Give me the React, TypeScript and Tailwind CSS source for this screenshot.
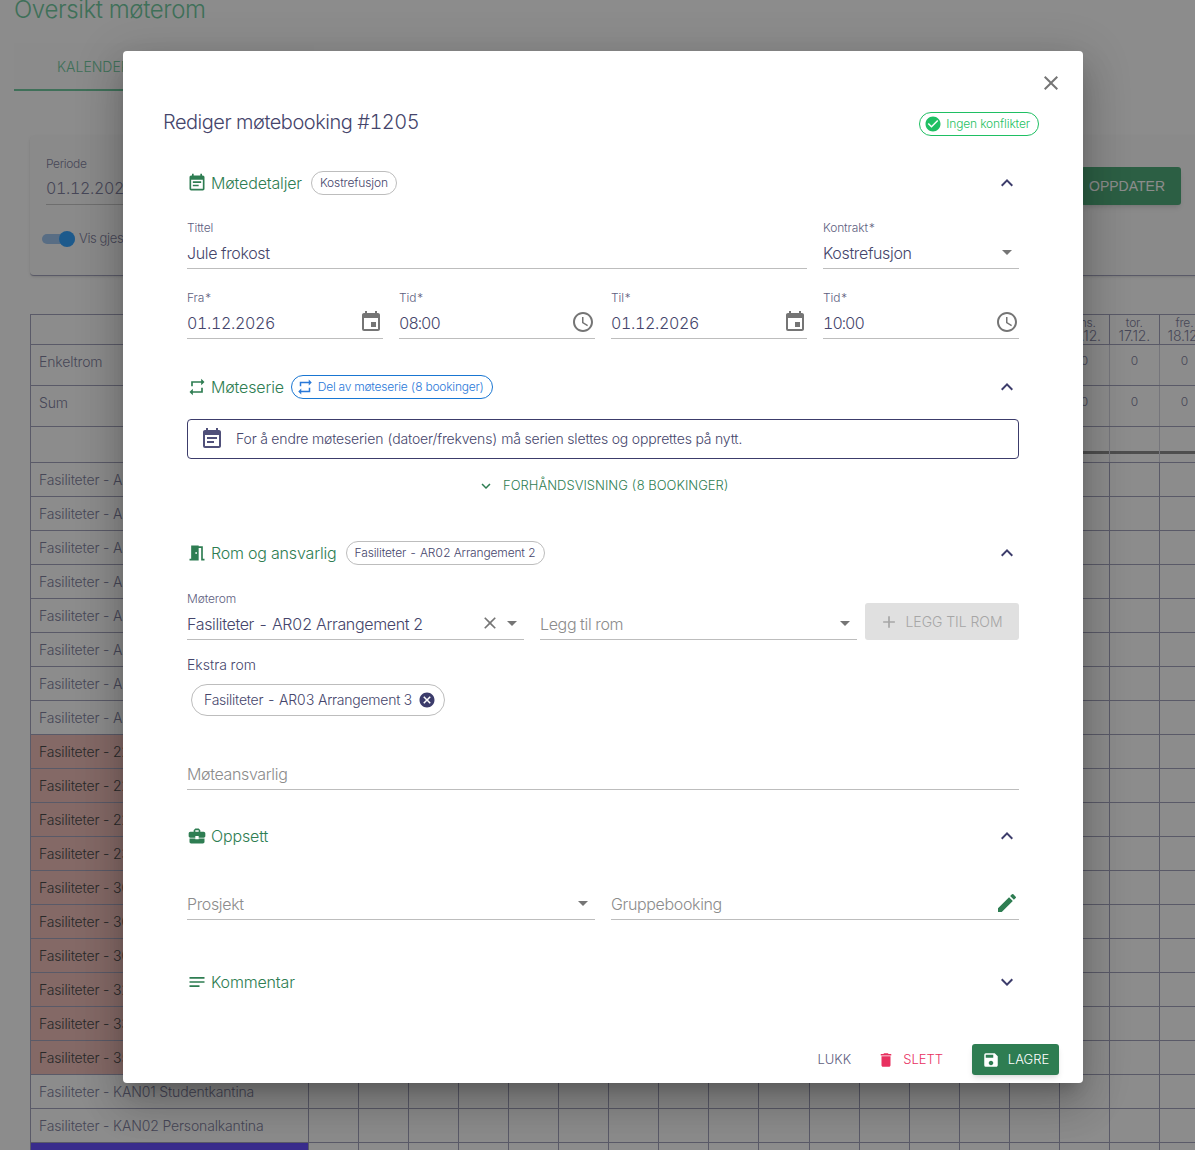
import type { ReactNode } from "react";
import {
  MdAccessTime,
  MdAdd,
  MdArrowDropDown,
  MdBusinessCenter,
  MdCancel,
  MdCheckCircle,
  MdClose,
  MdDelete,
  MdEdit,
  MdEvent,
  MdEventNote,
  MdExpandLess,
  MdExpandMore,
  MdMeetingRoom,
  MdNotes,
  MdRepeat,
  MdSave,
} from "react-icons/md";

const roomRows = [
  ...["AR01 Arrangement 1", "AR02 Arrangement 2", "AR03 Arrangement 3", "AR04 Arrangement 4", "AR05 Arrangement 5", "AR06 Arrangement 6", "AR07 Arrangement 7", "AR08 Arrangement 8"].map((n) => ({ name: n, red: false })),
  ...["227", "228", "229", "230", "301", "302", "303", "320", "330", "350"].map((n) => ({ name: n, red: true })),
  { name: "KAN01 Studentkantina", red: false },
  { name: "KAN02 Personalkantina", red: false },
];

const dayCols = Array.from({ length: 18 }, (_, i) => i);

// Bakgrunnssiden bak dialogen
const BackgroundTable = () => (
  <table className="ml-[30px] mt-[38px] w-[1180px] table-fixed border-collapse text-[14px] normal-nums tracking-[-0.011em] text-[#8282a0]">
    <colgroup>
      <col className="w-[278px]" />
      {dayCols.map((c) => (
        <col key={c} className="w-[50.05px]" />
      ))}
    </colgroup>
    <tbody>
      <tr className="h-[30px]">
        <td className="border border-[#a5a5bd]" />
        {dayCols.map((c) => (
          <td key={c} className="border border-[#a5a5bd] text-center text-[12px] leading-[13px]">
            {c === 15 && <>ons.<br /><span className="text-[14px]">16.12.</span></>}
            {c === 16 && <>tor.<br /><span className="text-[14px]">17.12.</span></>}
            {c === 17 && <>fre.<br /><span className="text-[14px]">18.12.</span></>}
          </td>
        ))}
      </tr>
      {["Enkeltrom", "Sum"].map((label) => (
        <tr key={label} className="h-[41px]">
          <td className="border border-[#a5a5bd] px-2 pb-[7px]">{label}</td>
          {dayCols.map((c) => (
            <td key={c} className="border-y border-y-[#a5a5bd] border-x border-x-[#d5d5e0] pb-[9px] text-center text-[12px]">
              {c >= 15 ? "0" : ""}
            </td>
          ))}
        </tr>
      ))}
      <tr className="h-[36px]">
        <td className="border border-[#a5a5bd]" />
        {dayCols.map((c) => (
          <td key={c} className="border border-[#d5d5e0] border-b-[#a5a5bd] p-0 align-top">
            <div className="mt-[24px] h-[3px] bg-[#8e8e8e]" />
          </td>
        ))}
      </tr>
      {roomRows.map((row) => (
        <tr key={row.name} className="h-[34px]">
          <td className={`border border-[#a5a5bd] whitespace-nowrap px-2 ${row.red ? "bg-[#f0c0bb] text-[#4c4c4c]" : ""}`}>
            Fasiliteter - {row.name}
          </td>
          {dayCols.map((c) => (
            <td key={c} className="border border-[#a5a5bd]" />
          ))}
        </tr>
      ))}
      <tr className="h-[34px]">
        <td className="border border-[#a5a5bd] bg-[#6950ff]" />
        {dayCols.map((c) => (
          <td key={c} className="border border-[#a5a5bd]" />
        ))}
      </tr>
    </tbody>
  </table>
);

const BackgroundPage = () => (
  <div className="bg-white">
    <h1 className="-mt-[4px] ml-[14px] text-[24px] leading-[28px] text-[#73cca2]">Oversikt møterom</h1>
    <div className="ml-[14px] mt-[19px] h-[48px] w-[300px] border-b-2 border-[#73cca2] bg-[#fdfdfd] pl-[43px] pt-[14px] text-[14px] leading-[20px] tracking-normal text-[#73cca2]">
      KALENDER
    </div>
    <div className="ml-[30px] mt-[45px] flex h-[140px] w-[1180px] rounded border-b border-[#a5a5bd] bg-[#fcfcfc] pl-[16px] pr-[29px] pt-[21px] shadow-sm">
      <div className="w-[200px]">
        <div className="text-[12px] leading-[14px] text-[#8282a0]">Periode</div>
        <div className="mt-[5px] w-[180px] border-b border-[#c8c8c8] pb-[4px] text-[16px] leading-[24px] text-[#8282a0]">01.12.2026</div>
        <div className="-ml-[4px] mt-[24px] flex items-center gap-[4px] text-[13px] text-[#8282a0]">
          <div className="relative h-[10px] w-[33px] rounded-full bg-[#a0c6f0]">
            <div className="absolute -top-[3px] right-0 h-[16px] w-[16px] rounded-full bg-[#35a4ff]" />
          </div>
          Vis gjester
        </div>
      </div>
      <div className="ml-auto mt-[10px] flex h-[38px] w-[100px] items-center justify-end rounded-[3px] bg-[#50ad7c] pr-[16px] font-['Liberation_Sans',sans-serif] text-[14px] font-medium tracking-normal text-white shadow-md">
        OPPDATER
      </div>
    </div>
    <BackgroundTable />
  </div>
);

const Field = ({
  label,
  value,
  placeholder,
  right,
  valueClassName = "",
  className,
}: {
  label?: string;
  value?: string;
  placeholder?: string;
  right?: ReactNode;
  valueClassName?: string;
  className: string;
}) => (
  <div className={className}>
    {label && <div className="h-[14px] text-[12px] leading-[14px] tracking-[-0.01em] text-[#5e5e80]">{label}</div>}
    <div className="flex h-[34px] items-center border-b border-[#bdbdbd]">
      <span className={`flex-1 pt-[2px] text-[16px] ${value ? "text-[#45456b]" : "text-[#8c8c8c]"} ${valueClassName}`}>{value ?? placeholder}</span>
      {right}
    </div>
  </div>
);

const SectionHeader = ({
  icon,
  title,
  chip,
  open = true,
  className,
}: {
  icon: ReactNode;
  title: string;
  chip?: ReactNode;
  open?: boolean;
  className: string;
}) => (
  <div className={`flex h-[48px] items-center ${className}`}>
    <span className="text-[20px] text-[#2e7d52]">{icon}</span>
    <span className="ml-[4px] mr-px text-[16px] tracking-[-0.01em] text-[#2e7d52]">{title}</span>
    {chip}
    <span className="ml-auto text-[24px] text-[#3c3c6b]">{open ? <MdExpandLess /> : <MdExpandMore />}</span>
  </div>
);

const GrayChip = ({ children }: { children: ReactNode }) => (
  <span className="ml-[8px] flex h-[24px] items-center rounded-full border border-[#bdbdbd] px-[8px] text-[12px] tracking-[-0.012em] text-[#45456b]">
    {children}
  </span>
);

const Dialog = () => (
  <div className="absolute left-[123px] top-[51px] h-[1032px] w-[960px] rounded bg-white pt-[61px] shadow-[0_11px_15px_-7px_rgba(0,0,0,.2),0_24px_38px_3px_rgba(0,0,0,.14),0_9px_46px_8px_rgba(0,0,0,.12)]">
    <MdClose className="absolute right-[20px] top-[20px] text-[24px] text-[#757575]" />

    <div className="flex h-[23px] items-center pl-[40px] pr-[44px]">
      <h2 className="flex-1 pb-[3px] text-[20px] tracking-[-0.024em] text-[#45456b]">Rediger møtebooking #1205</h2>
      <span className="flex h-[24px] items-center gap-[4px] rounded-full border border-[#1fbf63] pl-[4px] pr-[8px] text-[12px] tracking-[-0.01em] text-[#1fbf63]">
        <MdCheckCircle className="text-[18px]" />
        Ingen konflikter
      </span>
    </div>

    <div className="px-[64px]">
      <SectionHeader
        className="mt-[24px]"
        icon={<MdEventNote />}
        title="Møtedetaljer"
        chip={<GrayChip>Kostrefusjon</GrayChip>}
      />
      <div className="mt-[14px] flex gap-[16px]">
        <Field className="w-[620px]" label="Tittel" value="Jule frokost" />
        <Field
          className="w-[196px]"
          label="Kontrakt*"
          value="Kostrefusjon"
          right={<MdArrowDropDown className="text-[24px] text-[#757575]" />}
        />
      </div>
      <div className="mt-[22px] flex gap-[16px]">
        <Field className="w-[196px]" label="Fra*" value="01.12.2026" right={<MdEvent className="text-[24px] text-[#757575]" />} />
        <Field className="w-[196px]" label="Tid*" value="08:00" valueClassName="tracking-[-0.06em]" right={<MdAccessTime className="text-[24px] text-[#757575]" />} />
        <Field className="w-[196px]" label="Til*" value="01.12.2026" right={<MdEvent className="text-[24px] text-[#757575]" />} />
        <Field className="w-[196px]" label="Tid*" value="10:00" valueClassName="tracking-[-0.06em]" right={<MdAccessTime className="text-[24px] text-[#757575]" />} />
      </div>

      <SectionHeader
        className="mt-[24px]"
        icon={<MdRepeat />}
        title="Møteserie"
        chip={
          <span className="ml-[6px] flex h-[24px] items-center gap-[4px] rounded-full border border-[#1976d2] pl-[4px] pr-[8px] text-[12px] tracking-[-0.019em] text-[#2979d9]">
            <MdRepeat className="text-[18px]" />
            Del av møteserie (8 bookinger)
          </span>
        }
      />
      <div className="mt-[8px] flex h-[40px] items-center gap-[12px] rounded border border-[#3c3c6b] pl-[12px] text-[14px] tracking-[-0.0105em] text-[#45456b]">
        <MdEventNote className="text-[24px] text-[#50507a]" />
        <span className="pb-[2px]">For å endre møteserien (datoer/frekvens) må serien slettes og opprettes på nytt.</span>
      </div>
      <div className="mt-[8px] flex h-[36px] items-center justify-center gap-[8px] pt-[2px] text-[13px] tracking-normal text-[#2e7d52]">
        <MdExpandMore className="text-[18px]" />
        FORHÅNDSVISNING (8 BOOKINGER)
      </div>

      <SectionHeader
        className="mt-[26px]"
        icon={<MdMeetingRoom />}
        title="Rom og ansvarlig"
        chip={<GrayChip>Fasiliteter - AR02 Arrangement 2</GrayChip>}
      />
      <div className="mt-[15px] flex items-end gap-[16px]">
        <Field
          className="w-[337px]"
          label="Møterom"
          value="Fasiliteter - AR02 Arrangement 2"
          right={
            <>
              <MdClose className="text-[20px] text-[#757575]" />
              <MdArrowDropDown className="text-[24px] text-[#757575]" />
            </>
          }
        />
        <Field
          className="w-[317px]"
          placeholder="Legg til rom"
          right={<MdArrowDropDown className="text-[24px] text-[#757575]" />}
        />
        <button className="-ml-[8px] flex h-[37px] w-[154px] items-center justify-center gap-[6px] rounded-[3px] bg-[#e0e0e0] pr-[2px] text-[14px] tracking-normal text-[#a6a6a6]">
          <MdAdd className="text-[20px]" />
          LEGG TIL ROM
        </button>
      </div>
      <div className="mt-[15px] text-[14px] leading-[20px] tracking-normal text-[#45456b]">Ekstra rom</div>
      <div className="ml-[4px] mt-[9px] flex h-[32px] w-fit items-center gap-[6px] rounded-full border border-[#bdbdbd] pl-[12px] pr-[8px] text-[14px] tracking-[-0.018em] text-[#45456b]">
        <span className="pb-[2px]">Fasiliteter - AR03 Arrangement 3</span>
        <MdCancel className="text-[18px] text-[#3c3c6b]" />
      </div>
      <Field className="mt-[40px] w-full" placeholder="Møteansvarlig" />

      <SectionHeader className="mt-[22px]" icon={<MdBusinessCenter />} title="Oppsett" />
      <div className="mt-[26px] flex gap-[16px]">
        <Field className="w-[408px]" placeholder="Prosjekt" right={<MdArrowDropDown className="text-[24px] text-[#757575]" />} />
        <Field className="w-[408px]" placeholder="Gruppebooking" right={<MdEdit className="text-[24px] text-[#2e7d52]" />} />
      </div>

      <SectionHeader className="mt-[38px]" icon={<MdNotes />} title="Kommentar" open={false} />
    </div>

    <div className="mt-[38px] flex h-[31px] items-center justify-end pr-[24px] text-[13px] tracking-normal">
      <span className="text-[#5e5e80]">LUKK</span>
      <span className="ml-[26px] flex items-center gap-[8px] text-[#e8305f]">
        <MdDelete className="text-[18px]" />
        SLETT
      </span>
      <button className="ml-[29px] flex h-[31px] w-[87px] items-center justify-center gap-[8px] rounded-[3px] bg-[#2e7d52] text-[13px] text-white shadow-md">
        <MdSave className="text-[18px]" />
        LAGRE
      </button>
    </div>
  </div>
);

export default function App() {
  return (
    <div className="relative h-[1150px] w-[1195px] overflow-hidden font-['Inter',sans-serif] font-[350] tracking-[-0.022em] tabular-nums">
      <BackgroundPage />
      <div className="absolute inset-0 bg-black/45" />
      <Dialog />
    </div>
  );
}
